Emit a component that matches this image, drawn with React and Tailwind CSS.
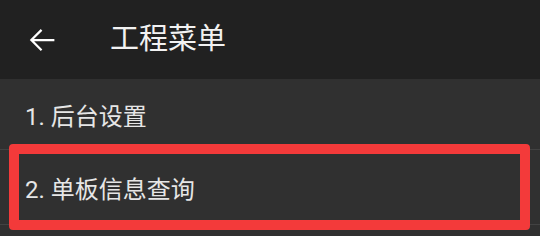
import React from 'react';

const font = { fontFamily: 'Roboto, "Noto Sans CJK SC", sans-serif' };

export default function App() {
  return (
    <div className="relative w-[540px] h-[236px] bg-[#303030] overflow-hidden" style={font}>
      <header className="flex items-center h-[79px] bg-[#212121]">
        <svg className="ml-[27px] w-[30px] h-[30px] text-white" viewBox="0 0 24 24" fill="none" stroke="currentColor" strokeWidth="1.8" strokeLinecap="square">
          <path d="M21 12H4.5M11 4.5L3.5 12L11 19.5" />
        </svg>
        <h1 className="ml-[53px] text-[29px] leading-none text-[#f2f2f2]">工程菜单</h1>
      </header>

      <div className="h-[71px] flex items-center pl-[25px] pt-[6px] border-b border-[#424242]">
        <span className="text-[24px] leading-none text-[#e6e6e6]">1. 后台设置</span>
      </div>
      <div className="h-[75px] flex items-center pl-[25px] pt-[5px] border-b border-[#424242]">
        <span className="text-[24px] leading-none text-[#e6e6e6]">2. 单板信息查询</span>
      </div>

      <div className="absolute left-[9px] top-[144px] w-[521px] h-[86px] border-[10px] border-[#f33a3a] rounded-[4px]" />
    </div>
  );
}
